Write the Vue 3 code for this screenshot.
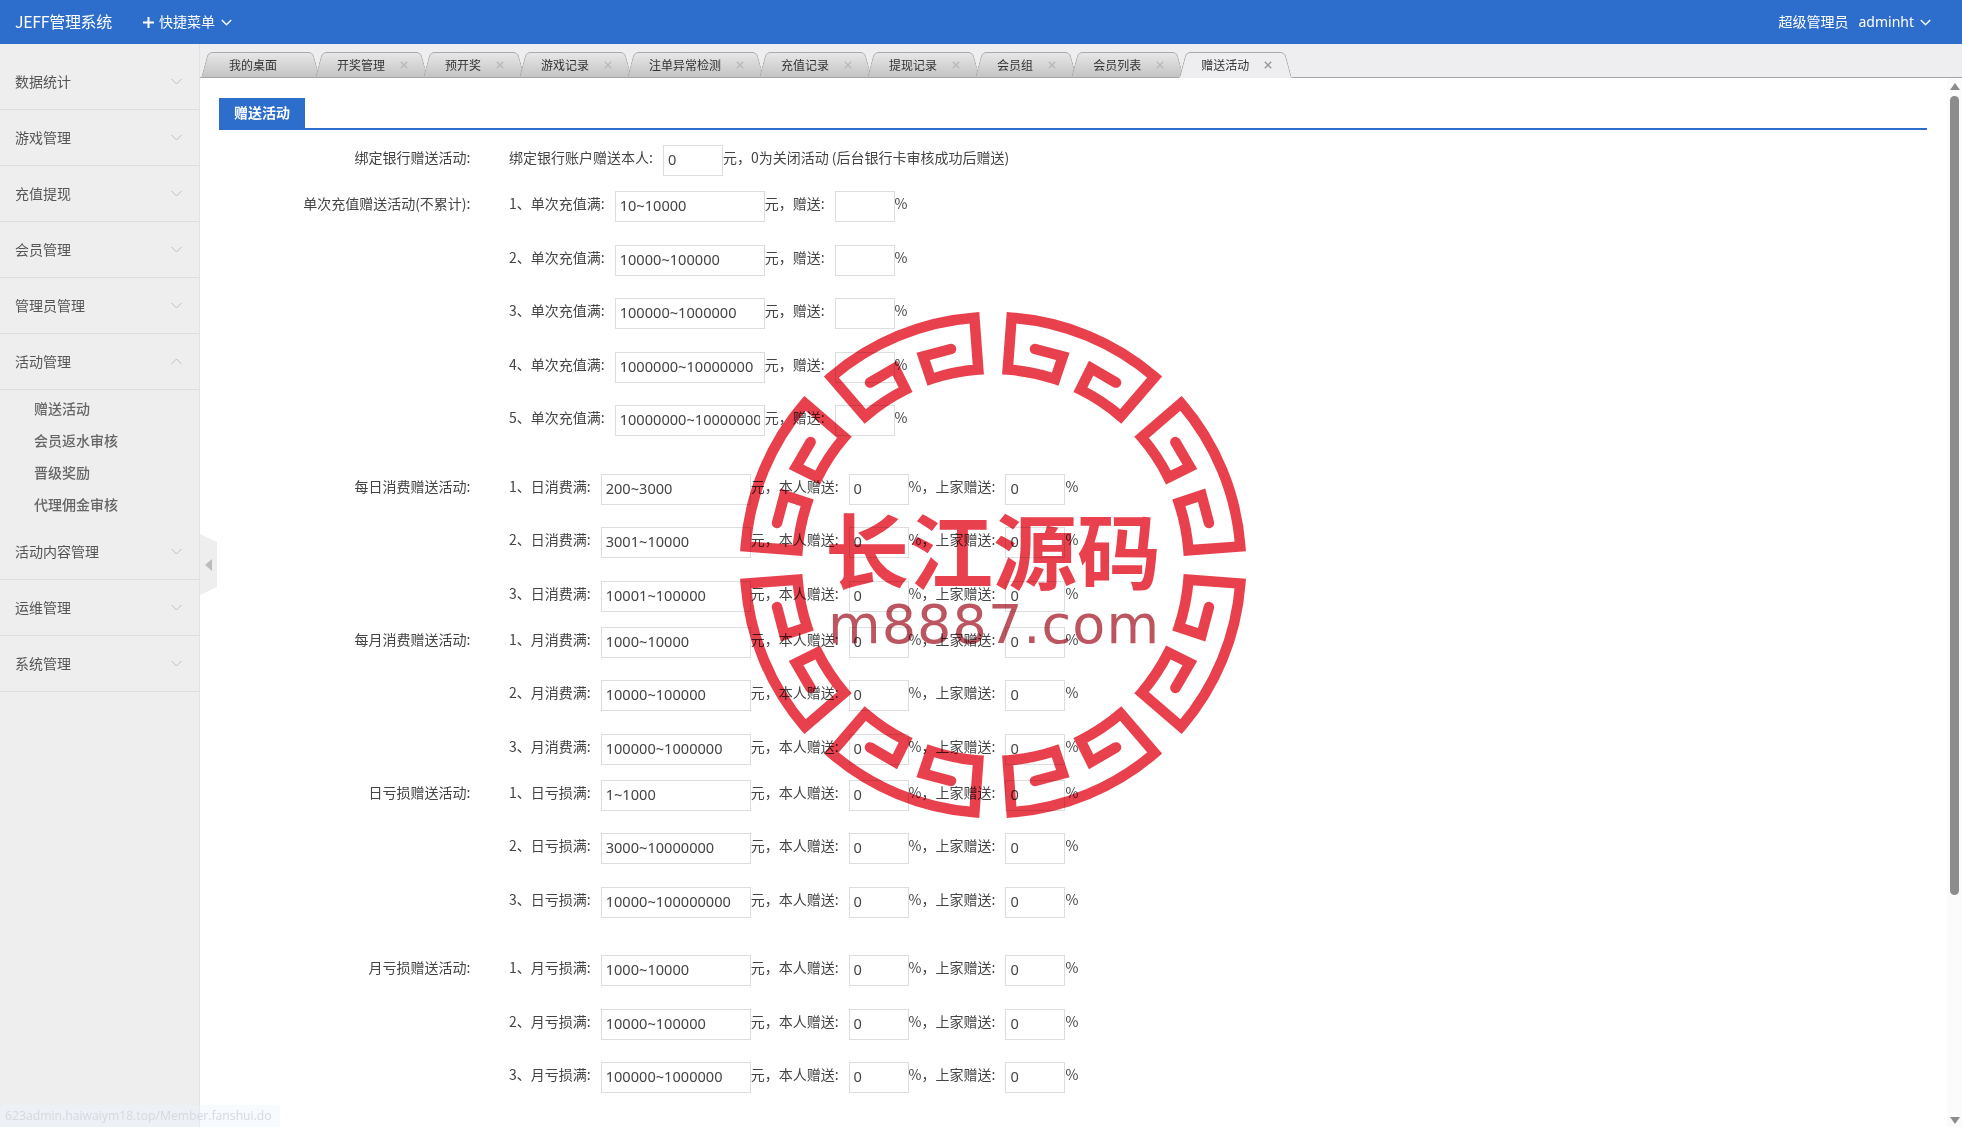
<script setup>
const menusTop = ['数据统计', '游戏管理', '充值提现', '会员管理', '管理员管理']
const menusBottom = ['活动内容管理', '运维管理', '系统管理']
const subItems = ['赠送活动', '会员返水审核', '晋级奖励', '代理佣金审核']
const tabs = ['我的桌面', '开奖管理', '预开奖', '游戏记录', '注单异常检测', '充值记录', '提现记录', '会员组', '会员列表', '赠送活动']

const makeLines = (name, values, zero) =>
  values.map((value, i) => ({ prefix: `${i + 1}、${name}:`, value, zero }))

const singleLines = makeLines('单次充值满', ['10~10000', '10000~100000', '100000~1000000', '1000000~10000000', '10000000~100000000'])
const groups = [
  { label: '每日消费赠送活动:', wide: true, lines: makeLines('日消费满', ['200~3000', '3001~10000', '10001~100000']) },
  { label: '每月消费赠送活动:', wide: false, lines: makeLines('月消费满', ['1000~10000', '10000~100000', '100000~1000000']) },
  { label: '日亏损赠送活动:', wide: false, lines: makeLines('日亏损满', ['1~1000', '3000~10000000', '10000~100000000']) },
  { label: '月亏损赠送活动:', wide: true, lines: makeLines('月亏损满', ['1000~10000', '10000~100000', '100000~1000000']) }
]

const pt = (r, deg) => {
  const a = (deg * Math.PI) / 180
  return `${(260 + r * Math.sin(a)).toFixed(2)} ${(260 - r * Math.cos(a)).toFixed(2)}`
}
const segPath = (o) =>
  `M${pt(220, o + 11)} L${pt(220, o + 18.5)} L${pt(196, o + 18.5)} A196 196 0 0 0 ${pt(196, o + 4.3)} ` +
  `L${pt(248, o + 4.3)} A248 248 0 0 1 ${pt(248, o + 40.7)} L${pt(196, o + 40.7)} ` +
  `A196 196 0 0 0 ${pt(196, o + 26.5)} L${pt(220, o + 26.5)} L${pt(220, o + 34)}`
const segments = Array.from({ length: 8 }, (_, i) => segPath(i * 45))
</script>

<template>
  <div class="page">
    <header class="topbar">
      <div class="logo">JEFF管理系统</div>
      <div class="quick">
        <svg class="plus" width="13" height="13" viewBox="0 0 13 13"><path d="M6.5 1v11M1 6.5h11" stroke="#fff" stroke-width="2" fill="none" /></svg>
        <span>快捷菜单</span>
        <svg class="caret" width="11" height="7" viewBox="0 0 11 7"><path d="M.8 1l4.7 4.7L10.2 1" stroke="#fff" stroke-width="1.4" fill="none" /></svg>
      </div>
      <div class="user">
        <span class="role">超级管理员</span>
        <span class="name">adminht</span>
        <svg class="caret" width="11" height="7" viewBox="0 0 11 7"><path d="M.8 1l4.7 4.7L10.2 1" stroke="#fff" stroke-width="1.4" fill="none" /></svg>
      </div>
    </header>

    <div class="body">
      <aside class="sidebar">
        <div v-for="m in menusTop" :key="m" class="menu">
          <span>{{ m }}</span>
          <svg width="11" height="7" viewBox="0 0 11 7"><path d="M.5 1l5 5 5-5" stroke="#bdbdbd" stroke-width="1" fill="none" /></svg>
        </div>
        <div class="menu">
          <span>活动管理</span>
          <svg width="11" height="7" viewBox="0 0 11 7"><path d="M.5 6l5-5 5 5" stroke="#bdbdbd" stroke-width="1" fill="none" /></svg>
        </div>
        <ul class="submenu">
          <li v-for="s in subItems" :key="s">{{ s }}</li>
        </ul>
        <div v-for="m in menusBottom" :key="m" class="menu">
          <span>{{ m }}</span>
          <svg width="11" height="7" viewBox="0 0 11 7"><path d="M.5 1l5 5 5-5" stroke="#bdbdbd" stroke-width="1" fill="none" /></svg>
        </div>
        <div class="collapse"><i></i></div>
      </aside>

      <main class="main">
        <nav class="tabbar">
          <div v-for="(t, i) in tabs" :key="t" class="tab" :class="{ first: i === 0, active: i === tabs.length - 1 }">
            <span class="tab-text">{{ t }}</span>
            <svg v-if="i > 0" class="tab-x" width="8" height="8" viewBox="0 0 8 8"><path d="M.8.8l6.4 6.4M7.2.8L.8 7.2" fill="none" /></svg>
          </div>
        </nav>

        <div class="workspace">
          <section class="panel">
            <div class="panel-head"><span>赠送活动</span></div>
            <div class="form">
              <div class="group">
                <label class="glabel">绑定银行赠送活动:</label>
                <div class="lines">
                  <div class="line">
                    <span>绑定银行账户赠送本人:</span>
                    <input class="ipt small" value="0" />
                    <span class="after">元，0为关闭活动 (后台银行卡审核成功后赠送)</span>
                  </div>
                </div>
              </div>

              <div class="group">
                <label class="glabel">单次充值赠送活动(不累计):</label>
                <div class="lines">
                  <div v-for="l in singleLines" :key="l.prefix" class="line">
                    <span>{{ l.prefix }}</span>
                    <input class="ipt big" :value="l.value" />
                    <span class="after">元，赠送:</span>
                    <input class="ipt small" value="" />
                    <span class="after">%</span>
                  </div>
                </div>
              </div>

              <div v-for="g in groups" :key="g.label" class="group" :class="{ wide: g.wide }">
                <label class="glabel">{{ g.label }}</label>
                <div class="lines">
                  <div v-for="l in g.lines" :key="l.prefix" class="line">
                    <span>{{ l.prefix }}</span>
                    <input class="ipt big" :value="l.value" />
                    <span class="after">元，本人赠送:</span>
                    <input class="ipt small" value="0" />
                    <span class="after">%，上家赠送:</span>
                    <input class="ipt small" value="0" />
                    <span class="after">%</span>
                  </div>
                </div>
              </div>
            </div>
          </section>

          <div class="scrollbar">
            <i class="arrow up"></i>
            <i class="thumb"></i>
            <i class="arrow down"></i>
          </div>
        </div>
      </main>
    </div>

    <svg class="stamp" width="520" height="520" viewBox="0 0 520 520">
      <path v-for="(d, i) in segments" :key="i" :d="d" fill="none" stroke="#e9404e" stroke-width="10.5" stroke-linejoin="miter" stroke-linecap="round" />
      <text class="stamp-cn" x="92" y="278" textLength="336" lengthAdjust="spacingAndGlyphs">长江源码</text>
      <text class="stamp-en" x="95" y="338" textLength="331" lengthAdjust="spacing">m8887.com</text>
    </svg>

    <div class="status">623admin.haiwaiym18.top/Member.fanshui.do</div>
  </div>
</template>

<style>
html, body { margin: 0; overflow: hidden; background: #fff; }
</style>

<style scoped>
.page {
  position: relative;
  width: 100%;
  height: 1127px;
  overflow: hidden;
  display: flex;
  flex-direction: column;
  font-family: "Noto Sans CJK SC", "Noto Sans", sans-serif;
  font-size: 14px;
  color: #444;
  background: #fff;
}
.topbar {
  height: 44px;
  flex: none;
  display: flex;
  align-items: center;
  padding: 0 31px 0 15px;
  background: #2d6dcc;
  color: #fff;
}
.logo { font-size: 16px; width: 127px; letter-spacing: -0.35px; padding-bottom: 2px; }
.quick { display: flex; align-items: center; }
.quick span { padding-bottom: 2px; }
.plus { margin-right: 4px; }
.quick .caret { margin-left: 6px; }
.user { margin-left: auto; display: flex; align-items: center; }
.role { padding-bottom: 2px; }
.name { font-family: "Noto Sans", sans-serif; margin-left: 10px; padding-bottom: 2px; }
.user .caret { margin-left: 6px; }

.body { flex: 1; display: flex; min-height: 0; }
.sidebar {
  position: relative;
  width: 200px;
  flex: none;
  box-sizing: border-box;
  padding-top: 10px;
  background: #eee;
  border-right: 1px solid #e2e2e2;
}
.menu {
  height: 56px;
  box-sizing: border-box;
  display: flex;
  align-items: center;
  justify-content: space-between;
  padding: 0 17px 0 15px;
  border-bottom: 1px solid #dedede;
  color: #555;
}
.menu span { padding-bottom: 2px; }
.submenu {
  list-style: none;
  margin: 0;
  padding: 3px 0;
  height: 134px;
  box-sizing: border-box;
}
.submenu li {
  height: 32px;
  line-height: 30px;
  padding-left: 34px;
  color: #666;
  font-weight: 500;
}
.collapse {
  position: absolute;
  left: 200px;
  top: 490px;
  width: 17px;
  height: 61px;
  background: #eee;
  clip-path: polygon(0 0, 100% 13%, 100% 87%, 0 100%);
  display: flex;
  align-items: center;
}
.collapse i {
  margin-left: 5px;
  width: 0;
  height: 0;
  border-style: solid;
  border-width: 6.5px 7px 6.5px 0;
  border-color: transparent #bcbcbc transparent transparent;
}

.main { flex: 1; display: flex; flex-direction: column; min-width: 0; }
.tabbar {
  height: 34px;
  flex: none;
  box-sizing: border-box;
  display: flex;
  padding: 8px 0 0 1px;
  background: #eeeef0;
  border-bottom: 1px solid #a6a6a6;
}
.tab {
  position: relative;
  height: 26px;
  display: flex;
  align-items: center;
  box-sizing: border-box;
  padding: 0 20px 0 22px;
  margin-left: -5px;
  font-size: 12px;
  color: #333;
}
.tab:first-child { margin-left: 0; }
.tab.first { padding: 0 43px 0 28px; }
.tab::before,
.tab::after {
  content: "";
  position: absolute;
  top: 0;
  bottom: 0;
  width: 55%;
  box-sizing: border-box;
  background: linear-gradient(#e7e7e7, #c4c4c4);
  border-top: 1px solid #a9a9a9;
  border-bottom: 1px solid #a6a6a6;
}
.tab::before {
  left: 0;
  border-left: 1px solid #a9a9a9;
  border-top-left-radius: 5px;
  transform-origin: bottom left;
  transform: skewX(-15deg);
}
.tab::after {
  right: 0;
  border-right: 1px solid #a9a9a9;
  border-top-right-radius: 5px;
  transform-origin: bottom right;
  transform: skewX(15deg);
}
.tab.active::before,
.tab.active::after { background: #eeeef0; border-bottom-color: #eeeef0; }
.tab-text { position: relative; z-index: 1; padding-bottom: 1px; }
.tab-x { position: relative; z-index: 1; margin-left: 15px; stroke: #b9b9b9; stroke-width: 1.4; }
.tab.active .tab-x { stroke: #999; }

.workspace { flex: 1; display: flex; min-height: 0; }
.panel { flex: 1; min-width: 0; padding: 20px 20px 0 19px; }
.panel-head {
  height: 32px;
  box-sizing: border-box;
  border-bottom: 2px solid #2d6dcc;
}
.panel-head span {
  display: inline-block;
  height: 32px;
  line-height: 28px;
  padding: 0 15px;
  background: #2d6dcc;
  color: #fff;
  font-weight: 700;
}
.form { display: flex; flex-direction: column; gap: 15px; margin-top: 15px; }
.group { display: flex; }
.group.wide { margin-top: 22.5px; }
.glabel {
  width: 251.5px;
  flex: none;
  text-align: right;
  line-height: 25px;
  height: 31px;
}
.lines { margin-left: 38.5px; display: flex; flex-direction: column; gap: 22.5px; }
.line { display: flex; align-items: flex-start; height: 31px; line-height: 25px; white-space: nowrap; }
.ipt {
  box-sizing: border-box;
  height: 31px;
  margin: 0 0 0 10px;
  padding: 0 4px 3px;
  border: 1px solid #ddd;
  border-radius: 0;
  outline: none;
  background: transparent;
  font-family: "Noto Sans", sans-serif;
  font-size: 14.6px;
  color: #444;
}
.ipt.big { width: 150px; }
.ipt.small { width: 60px; }

.scrollbar {
  width: 15px;
  flex: none;
  box-sizing: border-box;
  display: flex;
  flex-direction: column;
  align-items: center;
  padding: 5px 0 3px;
  background: #fbfbfb;
}
.arrow { width: 0; height: 0; border-style: solid; }
.arrow.up { border-width: 0 5px 7px; border-color: transparent transparent #8c8c8c; }
.arrow.down { margin-top: auto; border-width: 7px 5px 0; border-color: #8c8c8c transparent transparent; }
.thumb { width: 9px; height: 799px; margin-top: 6px; border-radius: 5px; background: #8c8c8c; }

.stamp {
  position: absolute;
  left: 733px;
  top: 305px;
  pointer-events: none;
  mix-blend-mode: multiply;
  filter: blur(0.5px);
}
.stamp-cn {
  font-family: "Noto Sans CJK SC", sans-serif;
  font-weight: 700;
  font-size: 82px;
  fill: #e9404e;
}
.stamp-en {
  font-family: "DejaVu Sans", sans-serif;
  font-size: 54px;
  fill: #bd5560;
}

.status {
  position: absolute;
  left: 0;
  bottom: 0;
  width: 280px;
  height: 22px;
  box-sizing: border-box;
  padding-left: 5px;
  line-height: 22px;
  font-family: "Open Sans", sans-serif;
  font-size: 12.2px;
  color: #d6d9de;
  background: rgba(235, 243, 255, 0.4);
  border-top-right-radius: 4px;
  white-space: nowrap;
  overflow: hidden;
}
</style>
